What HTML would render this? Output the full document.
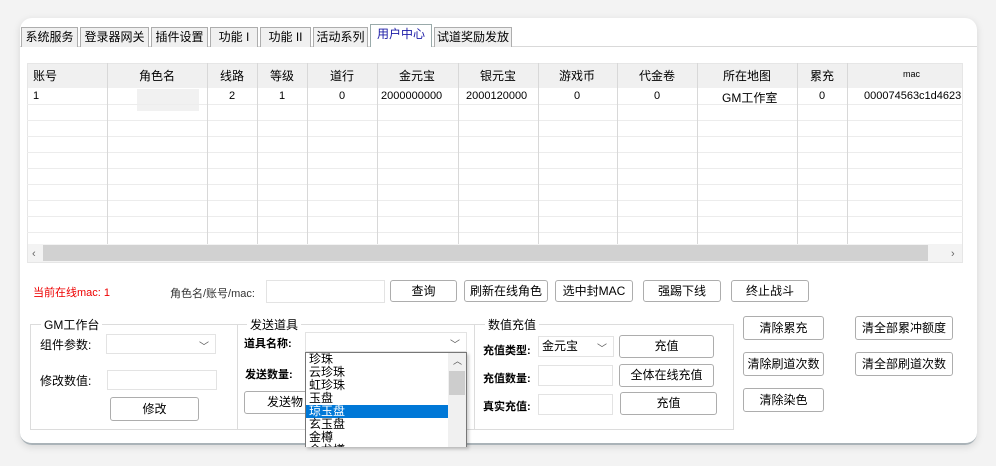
<!DOCTYPE html>
<html><head><meta charset="utf-8"><style>
*{box-sizing:border-box;margin:0;padding:0}
body{width:996px;height:466px;background:#f3f3f3;font-family:"Liberation Sans","Noto Sans CJK SC",sans-serif;font-size:12px;color:#000;position:relative;overflow:hidden}
.card{position:absolute;left:20px;top:18px;width:957px;height:427px;background:#fff;border-radius:12px;box-shadow:0 2px 8px rgba(0,0,0,.12)}
.a{position:absolute;white-space:nowrap}
.tab{position:absolute;top:27px;height:20px;border:1px solid #adadad;border-bottom:none;background:#f0f0f0;text-align:center;line-height:18px;font-size:12px}
.panel{position:absolute;left:20px;top:46px;width:957px;height:399px;border-top:1px solid #d9d9d9;border-bottom:2px solid #aab3b8;border-radius:0 0 12px 12px}
.btn{position:absolute;border:1px solid #adadad;border-radius:3px;background:#fff;text-align:center;font-size:12px}
.inp{position:absolute;border:1px solid #e3e3e3;background:#fff}
.grp{position:absolute;border:1px solid #dcdcdc}
.gt{position:absolute;background:#fff;padding:0 3px;top:-9px;font-size:12px}
.b{font-weight:bold}
.chev{position:absolute;right:6px;top:3px;font-size:10px;color:#555}
</style></head><body>
<div class="card"></div>
<div class="panel"></div>
<div class="tab" style="left:21px;width:57px">系统服务</div>
<div class="tab" style="left:80px;width:69px">登录器网关</div>
<div class="tab" style="left:151px;width:57px">插件设置</div>
<div class="tab" style="left:210px;width:48px">功能 I</div>
<div class="tab" style="left:260px;width:51px">功能 II</div>
<div class="tab" style="left:313px;width:55px">活动系列</div>
<div class="tab" style="left:370px;width:62px;top:24px;height:23px;background:#fff;color:#1a1aa6;border-color:#9aa">用户中心</div>
<div class="tab" style="left:434px;width:78px">试道奖励发放</div>

<svg class="a" style="left:27px;top:63px" width="936" height="200">
<rect x="0.5" y="0.5" width="935" height="199" fill="#fff" stroke="#e6e6e6"/>
<rect x="1" y="1" width="934" height="24" fill="#f0f0f0"/>
<g stroke="#ececec">
<line x1="0" y1="41.5" x2="936" y2="41.5"/><line x1="0" y1="57.5" x2="936" y2="57.5"/><line x1="0" y1="73.5" x2="936" y2="73.5"/><line x1="0" y1="89.5" x2="936" y2="89.5"/><line x1="0" y1="105.5" x2="936" y2="105.5"/><line x1="0" y1="121.5" x2="936" y2="121.5"/><line x1="0" y1="137.5" x2="936" y2="137.5"/><line x1="0" y1="153.5" x2="936" y2="153.5"/><line x1="0" y1="169.5" x2="936" y2="169.5"/>
</g>
<g stroke="#d8d8d8">
<line x1="80.5" y1="0" x2="80.5" y2="181"/><line x1="180.5" y1="0" x2="180.5" y2="181"/><line x1="230.5" y1="0" x2="230.5" y2="181"/><line x1="280.5" y1="0" x2="280.5" y2="181"/><line x1="350.5" y1="0" x2="350.5" y2="181"/><line x1="431.5" y1="0" x2="431.5" y2="181"/><line x1="511.5" y1="0" x2="511.5" y2="181"/><line x1="590.5" y1="0" x2="590.5" y2="181"/><line x1="670.5" y1="0" x2="670.5" y2="181"/><line x1="770.5" y1="0" x2="770.5" y2="181"/><line x1="820.5" y1="0" x2="820.5" y2="181"/>
</g>
<rect x="1" y="181" width="934" height="18" fill="#f3f3f3"/>
<rect x="16" y="182" width="885" height="16" fill="#d1d1d1"/>
<text x="5" y="194" font-size="11" fill="#666">‹</text><text x="924" y="194" font-size="11" fill="#666">›</text>
<rect x="110" y="26" width="62" height="22" fill="#eee" opacity=".8"/>
</svg>
<div class="a" style="left:33px;top:67px">账号</div>
<div class="a" style="left:139px;top:67px">角色名</div>
<div class="a" style="left:220px;top:67px">线路</div>
<div class="a" style="left:270px;top:67px">等级</div>
<div class="a" style="left:330px;top:67px">道行</div>
<div class="a" style="left:399px;top:67px">金元宝</div>
<div class="a" style="left:480px;top:67px">银元宝</div>
<div class="a" style="left:559px;top:67px">游戏币</div>
<div class="a" style="left:639px;top:67px">代金卷</div>
<div class="a" style="left:723px;top:67px">所在地图</div>
<div class="a" style="left:810px;top:67px">累充</div>
<div class="a" style="left:903px;top:69px;font-size:9px">mac</div>
<div class="a" style="top:90px;left:33px;font-size:11px">1</div>
<div class="a" style="top:90px;left:229px;font-size:11px">2</div>
<div class="a" style="top:90px;left:279px;font-size:11px">1</div>
<div class="a" style="top:90px;left:339px;font-size:11px">0</div>
<div class="a" style="top:90px;left:381px;font-size:11px">2000000000</div>
<div class="a" style="top:90px;left:466px;font-size:11px">2000120000</div>
<div class="a" style="top:90px;left:574px;font-size:11px">0</div>
<div class="a" style="top:90px;left:654px;font-size:11px">0</div>
<div class="a" style="top:89px;left:722px">GM工作室</div>
<div class="a" style="top:90px;left:819px;font-size:11px">0</div>
<div class="a" style="top:90px;left:864px;font-size:11px;width:98px;overflow:hidden">000074563c1d4623</div>

<div class="a" style="left:33px;top:284px;color:#e00;font-size:11px">当前在线mac: 1</div>
<div class="a" style="left:170px;top:285px;font-size:11px;color:#333">角色名/账号/mac:</div>
<div class="inp" style="left:266px;top:280px;width:119px;height:23px"></div>
<div class="btn" style="left:390px;top:280px;width:67px;height:22px;line-height:20px">查询</div>
<div class="btn" style="left:464px;top:280px;width:84px;height:22px;line-height:20px">刷新在线角色</div>
<div class="btn" style="left:555px;top:280px;width:78px;height:22px;line-height:20px">选中封MAC</div>
<div class="btn" style="left:643px;top:280px;width:78px;height:22px;line-height:20px">强踢下线</div>
<div class="btn" style="left:731px;top:280px;width:78px;height:22px;line-height:20px">终止战斗</div>

<div class="grp" style="left:30px;top:324px;width:208px;height:106px"><div class="gt" style="left:10px">GM工作台</div></div>
<div class="grp" style="left:237px;top:324px;width:238px;height:106px"><div class="gt" style="left:9px">发送道具</div></div>
<div class="grp" style="left:474px;top:324px;width:260px;height:106px"><div class="gt" style="left:10px">数值充值</div></div>

<div class="a" style="left:40px;top:336px">组件参数:</div>
<div class="inp" style="left:106px;top:334px;width:110px;height:20px"><span class="chev">﹀</span></div>
<div class="a" style="left:40px;top:372px">修改数值:</div>
<div class="inp" style="left:107px;top:370px;width:110px;height:20px"></div>
<div class="btn" style="left:110px;top:397px;width:89px;height:24px;line-height:22px">修改</div>

<div class="a b" style="left:244px;top:335px;font-size:11px">道具名称:</div>
<div class="inp" style="left:305px;top:332px;width:162px;height:20px"><span class="chev">﹀</span></div>
<div class="a b" style="left:245px;top:366px;font-size:11px">发送数量:</div>
<div class="btn" style="left:244px;top:391px;width:70px;height:23px;line-height:21px;text-align:left;padding-left:22px;overflow:hidden">发送物品</div>
<div class="a" style="left:305px;top:352px;width:162px;height:95px;background:#fff;border:1px solid #777;border-bottom:none;box-shadow:2px 2px 3px rgba(0,0,0,.2);overflow:hidden;line-height:13px;font-size:12px">
<div style="padding-left:3px">珍珠</div><div style="padding-left:3px">云珍珠</div><div style="padding-left:3px">虹珍珠</div><div style="padding-left:3px">玉盘</div>
<div style="padding-left:3px;background:#0078d7;color:#fff;width:143px">琼玉盘</div>
<div style="padding-left:3px">玄玉盘</div><div style="padding-left:3px">金樽</div><div style="padding-left:3px">金龙樽</div>
<div style="position:absolute;right:0;top:0;width:18px;height:95px;background:#f0f0f0"><div style="position:absolute;top:2px;left:5px;font-size:9px;color:#555">︿</div><div style="position:absolute;top:18px;left:1px;width:16px;height:24px;background:#cdcdcd"></div></div>
</div>

<div class="a b" style="left:483px;top:342px;font-size:11px">充值类型:</div>
<div class="inp" style="left:538px;top:336px;width:76px;height:21px;padding-left:3px;line-height:19px">金元宝<span class="chev">﹀</span></div>
<div class="btn" style="left:619px;top:335px;width:95px;height:23px;line-height:21px">充值</div>
<div class="a b" style="left:483px;top:370px;font-size:11px">充值数量:</div>
<div class="inp" style="left:538px;top:365px;width:75px;height:21px"></div>
<div class="btn" style="left:619px;top:364px;width:95px;height:23px;line-height:21px">全体在线充值</div>
<div class="a b" style="left:483px;top:398px;font-size:11px">真实充值:</div>
<div class="inp" style="left:538px;top:394px;width:75px;height:21px"></div>
<div class="btn" style="left:620px;top:392px;width:97px;height:23px;line-height:21px">充值</div>

<div class="btn" style="left:743px;top:316px;width:81px;height:24px;line-height:22px">清除累充</div>
<div class="btn" style="left:743px;top:352px;width:81px;height:24px;line-height:22px">清除刷道次数</div>
<div class="btn" style="left:743px;top:388px;width:81px;height:24px;line-height:22px">清除染色</div>
<div class="btn" style="left:855px;top:316px;width:98px;height:24px;line-height:22px">清全部累冲额度</div>
<div class="btn" style="left:855px;top:352px;width:98px;height:24px;line-height:22px">清全部刷道次数</div>
</body></html>
